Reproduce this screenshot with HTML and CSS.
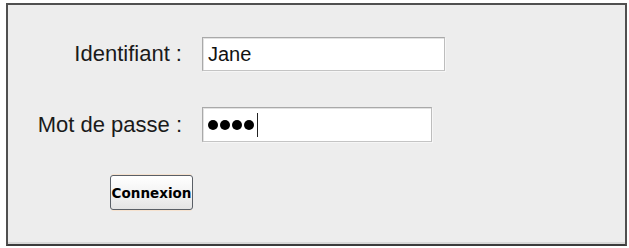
FILE: index.html
```html
<!DOCTYPE html>
<html lang="fr">
<head>
<meta charset="utf-8">
<title>Connexion</title>
<link rel="stylesheet" href="styles.css">
</head>
<body>
<form class="frame">
  <div class="grid">
    <label class="label" for="login">Identifiant :</label>
    <input class="field field-login" id="login" type="text" value="Jane">
    <label class="label" for="pwd">Mot de passe :</label>
    <div class="field field-pwd" id="pwd">
      <span class="dot"></span><span class="dot"></span><span class="dot"></span><span class="dot"></span><span class="caret"></span>
    </div>
    <button class="btn" type="button">Connexion</button>
  </div>
</form>
</body>
</html>
```
FILE: styles.css
```css
html, body {
  margin: 0;
  padding: 0;
  background: #ffffff;
}
body {
  width: 629px;
  height: 248px;
  overflow: hidden;
}
.frame {
  box-sizing: border-box;
  margin: 3px 2px 0 6px;
  width: 621px;
  height: 243px;
  border: 2px solid #505050;
  border-bottom-color: #3c3c3c;
  background: #ededed;
  box-shadow: inset 0 -2px 0 #d8d8d8;
  padding-top: 32px;
}
.grid {
  display: grid;
  grid-template-columns: 174px auto;
  column-gap: 20px;
  row-gap: 36px;
  align-items: center;
}
.label {
  justify-self: end;
  font-family: "Liberation Sans", Arial, sans-serif;
  font-size: 22px;
  color: #1a1a1a;
  line-height: 24px;
}
.field {
  box-sizing: border-box;
  height: 34px;
  border: 1px solid #a9a9a9;
  border-right-color: #bdbdbd;
  border-bottom-color: #c4c4c4;
  background: #ffffff;
  box-shadow: inset 1px 1px 0 #e2e2e2, 1px 1px 0 #f6f6f6;
  font-family: "Liberation Sans", Arial, sans-serif;
  font-size: 20px;
  color: #111;
  padding: 0 0 0 5px;
  margin: 0;
  outline: none;
  justify-self: start;
}
.field-login {
  width: 243px;
}
.field-pwd {
  width: 230px;
  height: 35px;
  display: flex;
  align-items: center;
  gap: 2px;
}
.dot {
  width: 10px;
  height: 10px;
  border-radius: 50%;
  background: #000;
}
.caret {
  width: 1px;
  height: 24px;
  background: #222;
  margin-left: 1px;
}
.btn {
  grid-column: 1 / span 2;
  justify-self: start;
  margin: -3px 0 0 102px;
  box-sizing: border-box;
  width: 83px;
  height: 35px;
  padding: 0;
  border: 1px solid #5a5f66;
  border-radius: 3px;
  background: linear-gradient(#ffffff, #f1f1f1 60%, #e4e4e4);
  box-shadow: 0 -2px 0 -1px #f6e2cf, 0 2px 0 -1px #f6e2cf;
  font-family: "DejaVu Sans", Verdana, sans-serif;
  font-weight: bold;
  font-size: 13.5px;
  color: #000;
  letter-spacing: 0;
}
```
